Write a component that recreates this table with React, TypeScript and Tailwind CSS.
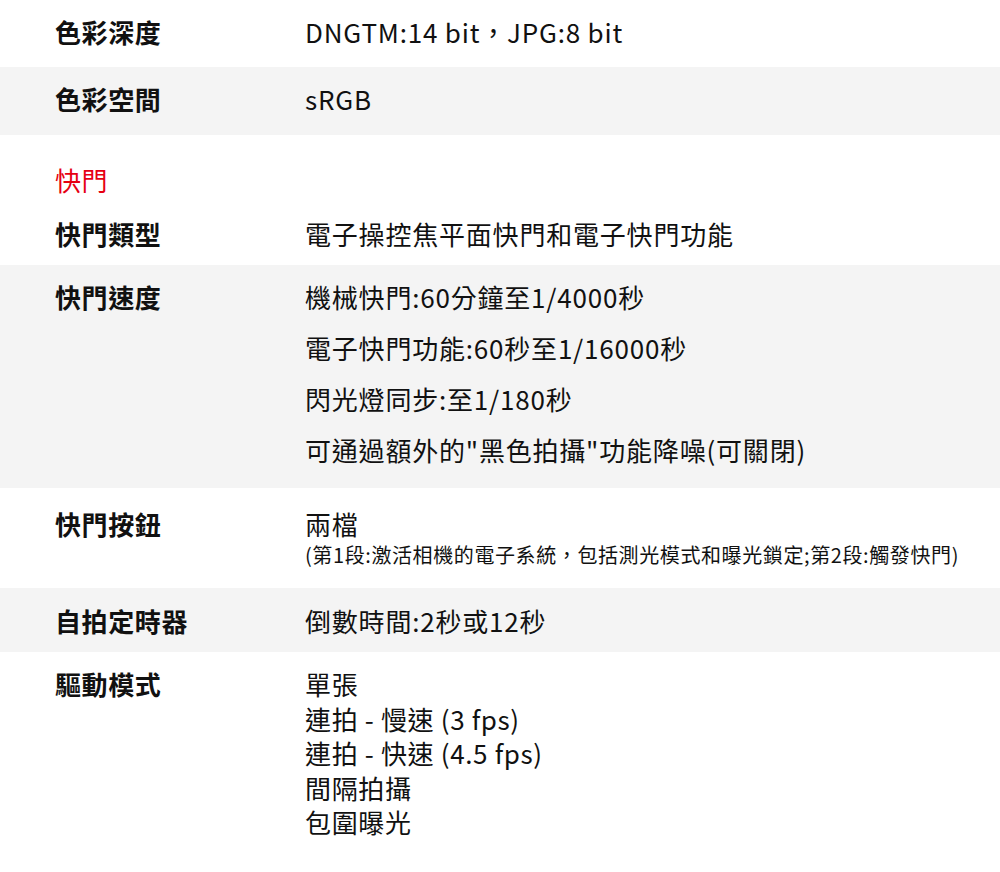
import React from "react";

const font = { fontFamily: '"Noto Sans CJK TC", "Noto Sans", sans-serif' };

function Label({ children }: { children: React.ReactNode }) {
  return (
    <div className="w-[250px] shrink-0 text-[26px] leading-[36px] font-bold tracking-[0.6px] text-[#111]">
      {children}
    </div>
  );
}

export default function App() {
  return (
    <div className="w-[1000px] h-[872px] bg-white text-[#111] overflow-hidden" style={font}>
      {/* 色彩深度 */}
      <div className="flex pl-[55px] pt-[14px] pb-[17px]">
        <Label>色彩深度</Label>
        <div className="text-[26px] leading-[36px] tracking-[0.8px]">DNGTM:14 bit，JPG:8 bit</div>
      </div>
      {/* 色彩空間 */}
      <div className="flex pl-[55px] pt-[14px] pb-[18px] bg-[#f4f4f4]">
        <Label>色彩空間</Label>
        <div className="text-[26px] leading-[36px] tracking-[0.8px]">sRGB</div>
      </div>
      {/* 快門 header */}
      <div className="pl-[55px] pt-[27px] pb-[7px]">
        <div className="text-[26px] leading-[36px] tracking-[0.6px] text-[#e60012]">快門</div>
      </div>
      {/* 快門類型 */}
      <div className="flex pl-[55px] pt-[11px] pb-[13px]">
        <Label>快門類型</Label>
        <div className="text-[26px] leading-[36px] tracking-[0.8px]">電子操控焦平面快門和電子快門功能</div>
      </div>
      {/* 快門速度 */}
      <div className="flex pl-[55px] pt-[14px] pb-[20px] bg-[#f4f4f4]">
        <Label>快門速度</Label>
        <div className="flex flex-col gap-[15px] text-[26px] leading-[36px] tracking-[0.8px]">
          <p>機械快門:60分鐘至1/4000秒</p>
          <p>電子快門功能:60秒至1/16000秒</p>
          <p>閃光燈同步:至1/180秒</p>
          <p>可通過額外的"黑色拍攝"功能降噪(可關閉)</p>
        </div>
      </div>
      {/* 快門按鈕 */}
      <div className="flex pl-[55px] pt-[18px] pb-[20px]">
        <Label>快門按鈕</Label>
        <div className="flex flex-col">
          <p className="text-[26px] leading-[36px] tracking-[0.8px]">兩檔</p>
          <p className="text-[20px] leading-[26px] tracking-[0.6px]">
            (第1段:激活相機的電子系統，包括測光模式和曝光鎖定;第2段:觸發快門)
          </p>
        </div>
      </div>
      {/* 自拍定時器 */}
      <div className="flex pl-[55px] pt-[15px] pb-[13px] bg-[#f4f4f4]">
        <Label>自拍定時器</Label>
        <div className="text-[26px] leading-[36px] tracking-[0.8px]">倒數時間:2秒或12秒</div>
      </div>
      {/* 驅動模式 */}
      <div className="flex pl-[55px] pt-[15px] pb-[33px]">
        <div className="w-[250px] shrink-0 text-[26px] leading-[34.5px] font-bold tracking-[0.6px] text-[#111]">
          驅動模式
        </div>
        <div className="flex flex-col text-[26px] leading-[34.5px] tracking-[0.65px]">
          <p>單張</p>
          <p>連拍 - 慢速 (3 fps)</p>
          <p>連拍 - 快速 (4.5 fps)</p>
          <p>間隔拍攝</p>
          <p>包圍曝光</p>
        </div>
      </div>
    </div>
  );
}
